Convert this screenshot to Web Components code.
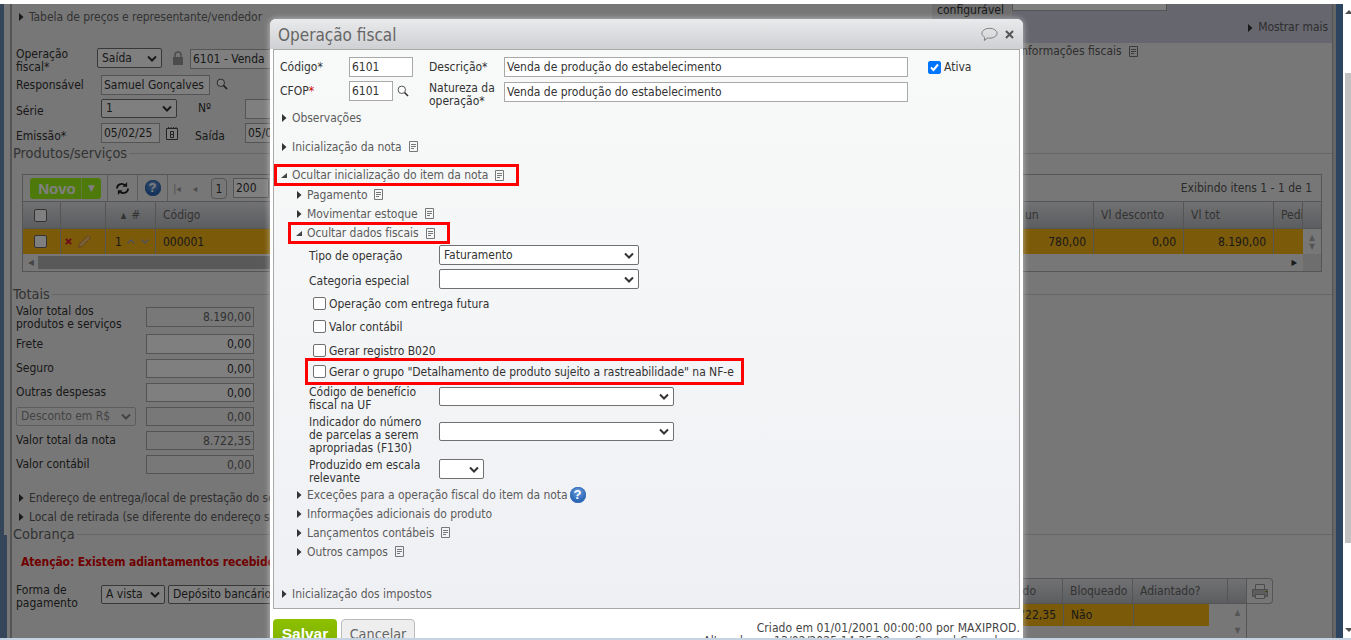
<!DOCTYPE html>
<html lang="pt-BR">
<head>
<meta charset="utf-8">
<title>Operação fiscal</title>
<style>
  html, body { margin: 0; height: 100%; overflow: hidden; background: #fff; }
  body { font-family: "DejaVu Sans Condensed", "DejaVu Sans", "Liberation Sans", sans-serif; font-size: 12px; color: #333; }
</style>
</head>
<body>
<app-frame>
  <app-form></app-form>
  <fiscal-modal slot="modal"></fiscal-modal>
</app-frame>

<script>
class Ui extends HTMLElement {
  constructor() {
    super();
    this.attachShadow({mode: 'open'});
  }
  connectedCallback() {
    if (!this.shadowRoot.innerHTML) this.shadowRoot.innerHTML = this.template;
  }
}

class UiInput extends Ui {
  get template() {
    return `<style>
      :host { display: block; box-sizing: border-box; height: 20px; border: 1px solid #a9a9a9; background: #fff; color: #333;
        padding: 0 2px; line-height: 19px; white-space: nowrap; overflow: hidden; flex: none; }
      :host([num]) { text-align: right; }
      :host([ro]) { color: #666; background: #f0f0f0; }
    </style><slot></slot>`;
  }
}
customElements.define('ui-input', UiInput);

class UiSelect extends Ui {
  get template() {
    return `<style>
      :host { display: flex; align-items: center; box-sizing: border-box; height: 20px; border: 1px solid #707070; border-radius: 2px;
        background: #fff; color: #333; padding: 0 4px; white-space: nowrap; overflow: hidden; flex: none; }
      :host([off]) { color: #888; border-color: #bbb; background: #eee; }
      span { flex: 1; min-width: 0; overflow: hidden; }
      svg { flex: none; margin-left: 3px; }
    </style><span><slot></slot></span>
    <svg width="10" height="7" viewBox="0 0 10 7"><path d="M1 1.500l4 4 4-4" fill="none" stroke="currentColor" stroke-width="2"/></svg>`;
  }
}
customElements.define('ui-select', UiSelect);

class UiCheck extends Ui {
  get template() {
    return `<style>
      :host { display: flex; align-items: center; height: 18px; color: #333; white-space: nowrap; flex: none; }
      i { box-sizing: border-box; width: 13px; height: 13px; border: 1px solid #707070; border-radius: 2px; background: #fff; margin-right: 3px; flex: none; display: block; }
      :host([on]) i { background: #0075ff; border-color: #0075ff; }
      svg { display: none; }
      :host([on]) svg { display: block; }
      span { padding-top: 1px; }
    </style><i><svg width="11" height="11" viewBox="0 0 11 11"><path d="M2 5.500l2.500 2.500 4.500-5.500" fill="none" stroke="#fff" stroke-width="2"/></svg></i><span><slot></slot></span>`;
  }
}
customElements.define('ui-check', UiCheck);

class NoteIcon extends Ui {
  get template() {
    return `<style>:host { display: inline-block; width: 9px; height: 11px; flex: none; }</style>
    <svg width="9" height="11" viewBox="0 0 9 11" style="display:block"><path d="M.5.500h8v10h-8z" fill="none" stroke="#777"/><path d="M2 3.500h5M2 5.500h5M2 7.500h3" stroke="#777"/></svg>`;
  }
}
customElements.define('note-icon', NoteIcon);

class HelpIcon extends Ui {
  get template() {
    return `<style>
      :host { display: inline-block; flex: none; width: 16px; height: 16px; border-radius: 50%; color: #fff; text-align: center;
        font: bold 13px/16px "Liberation Sans", sans-serif; background: radial-gradient(circle at 50% 30%, #6f9fe0, #1f5fb0 75%); box-shadow: inset 0 0 0 1px #3f73ba; }
    </style>?`;
  }
}
customElements.define('help-icon', HelpIcon);

class SearchIcon extends Ui {
  get template() {
    return `<style>:host { display: inline-block; width: 12px; height: 12px; flex: none; }</style>
    <svg width="12" height="12" viewBox="0 0 12 12" style="display:block"><circle cx="4.800" cy="4.800" r="3.700" fill="#fff" stroke="#555"/><path d="M7.500 7.500l3.500 3.500" stroke="#333" stroke-width="1.600"/></svg>`;
  }
}
customElements.define('search-icon', SearchIcon);

// linha recolhivel: seta + texto + icone
class FoldLink extends Ui {
  get template() {
    return `<style>
      :host { display: flex; align-items: center; height: 19px; color: #5c5c5c; white-space: nowrap; letter-spacing: -.05px; }
      svg { width: 6px; height: 8px; margin-right: 5px; flex: none; }
      ::slotted(note-icon) { margin-left: 7px; }
      ::slotted(help-icon) { margin-left: 2px; }
    </style>
    <svg viewBox="0 0 6 8">${this.hasAttribute('open')
      ? '<path d="M0 7l6-5v5z" fill="#444"/>'
      : '<path d="M1 0l4.500 4-4.500 4z" fill="#333"/>'}</svg><slot></slot>`;
  }
}
customElements.define('fold-link', FoldLink);

class RedMark extends Ui {
  get template() {
    return `<style>
      :host { display: flex; align-items: center; box-sizing: border-box; border: 3px solid #f00; }
    </style><slot></slot>`;
  }
}
customElements.define('red-mark', RedMark);

class FormRow extends Ui {
  get template() {
    return `<style>
      :host { display: flex; align-items: flex-start; color: #333; line-height: 13px; }
      ::slotted(label) { display: block; flex: none; }
    </style><slot></slot>`;
  }
}
customElements.define('form-row', FormRow);

class SectionTitle extends Ui {
  get template() {
    return `<style>
      :host { display: flex; align-items: center; height: 14px; font-size: 14.400px; color: #666; }
      i { flex: 1; height: 1px; background: #ccc; margin-left: 2px; }
    </style><slot></slot><i></i>`;
  }
}
customElements.define('section-title', SectionTitle);

class DataGrid extends Ui {
  get template() {
    return `<style>
      :host { display: block; box-sizing: border-box; border: 1px solid #aaa; color: #333; }
      .tools { display: flex; align-items: center; height: 26px; }
      .tools slot { display: flex; align-items: center; flex: 1; height: 100%; }
      .h, .r { display: grid; grid-template-columns: var(--cols); }
      .h { height: 28px; border-top: 1px solid #aaa; border-bottom: 1px solid #aaa; box-sizing: border-box; background: linear-gradient(#e2e3e7, #b9bbc0); }
      .r { height: 25px; background: #f6b414; }
      ::slotted([slot=head]), ::slotted([slot=row]) { display: contents; }
    </style>
    <div class="tools"><slot name="tools"></slot></div>
    <div class="h"><slot name="head"></slot></div>
    <div class="r"><slot name="row"></slot></div>
    <slot name="foot"></slot>`;
  }
}
customElements.define('data-grid', DataGrid);

class GridCell extends Ui {
  get template() {
    return `<style>
      :host { display: flex; align-items: center; box-sizing: border-box; padding: 0 7px; border-right: 1px solid #aaa; overflow: hidden; white-space: nowrap; min-width: 0; }
      :host([num]) { justify-content: flex-end; }
      :host([head]) { color: #666; }
      :host([bare]) { background: #eee; }
      :host([end]) { border-right: 0; padding: 0; justify-content: center; background: #ddd; }
    </style><slot></slot>`;
  }
}
customElements.define('grid-cell', GridCell);

class ItemsGrid extends Ui {
  get template() {
    return `<style>
      :host { display: block; margin: 0 10px; --cols: 38px 45px 50px 1fr 90px 90px 29px 18px; }
      .sep { width: 1px; height: 100%; background: #bbb; flex: none; }
      .novo { box-sizing: border-box; width: 71px; height: 21px; margin-left: 7px; margin-right: 6px; flex: none; border-radius: 3px; background: #9cf418; color: #fff;
        font: bold 15px/21px "Liberation Sans", sans-serif; display: flex; }
      .novo b { flex: 1; text-align: center; padding-left: 3px; }
      .novo i { width: 19px; border-left: 1px solid #c7f57a; text-align: center; font: 9px/20px "DejaVu Sans", sans-serif; }
      .ib { width: 29px; flex: none; display: flex; align-items: center; justify-content: center; height: 100%; }
      .pg { flex: none; color: #999; font-size: 10px; width: 18px; text-align: center; }
      .one { box-sizing: border-box; width: 16px; height: 21px; border: 1px solid #aaa; border-radius: 4px; text-align: center; line-height: 20px; margin: 0 6px 0 7px; flex: none; }
      ui-input { width: 36px; margin-bottom: 1px; border-color: #aaa; }
      .count { margin-left: auto; color: #555; padding-right: 9px; }
      .box { box-sizing: border-box; width: 13px; height: 13px; border: 1px solid #666; border-radius: 2px; background: #fff; display: block; margin: 0 auto; }
      .acts { display: flex; align-items: center; gap: 5px; }
      .foot { display: flex; align-items: center; height: 17px; background: #eee; }
      .foot span { width: 6px; text-align: center; font-size: 8px; color: #888; margin: 0 4px 0 5px; }
      .foot i { width: 985px; height: 13px; background: #b3b3b3; flex: none; }
      .foot u { flex: 1; }
      .foot em { width: 18px; height: 100%; background: #dcdcdc; margin-left: 6px; flex: none; }
      .foot b { font-size: 8px; color: #333; font-weight: normal; }
      .sc { font-size: 8px; line-height: 9px; color: #aaa; text-align: center; }
      .mv { margin-left: 5px; display: flex; gap: 6px; }
    </style>
    <data-grid>
      <div slot="tools" style="display:flex;align-items:center;width:100%;height:100%">
        <div class="novo"><b>Novo</b><i>▼</i></div>
        <div class="sep"></div>
        <div class="ib"><svg width="15" height="13" viewBox="0 0 16 14"><path d="M2 7a5 5 0 0 1 8.500-3.500" fill="none" stroke="#222" stroke-width="2"/><path d="M8 5h5V0z" fill="#222"/><path d="M14 7a5 5 0 0 1-8.500 3.500" fill="none" stroke="#222" stroke-width="2"/><path d="M8 9H3v5z" fill="#222"/></svg></div>
        <div class="sep"></div>
        <div class="ib"><help-icon></help-icon></div>
        <div class="sep"></div>
        <span class="pg">|◂</span><span class="pg">◂</span>
        <span class="one">1</span><ui-input>200</ui-input>
        <span class="count">Exibindo itens 1 - 1 de 1</span>
      </div>
      <div slot="head">
        <grid-cell head style="padding:0 9px 0 7px"><span class="box"></span></grid-cell>
        <grid-cell head></grid-cell>
        <grid-cell head style="justify-content:center"><span style="font-size:8px;margin-right:5px">▲</span>#</grid-cell>
        <grid-cell head style="justify-content:space-between">Código<span style="margin-right:-7px;margin-left:auto;border-left:1px solid #aaa;height:100%;display:flex;align-items:center;width:71px;box-sizing:border-box;padding-left:2px">un</span></grid-cell>
        <grid-cell head>Vl desconto</grid-cell>
        <grid-cell head>Vl tot</grid-cell>
        <grid-cell head style="padding:0 0 0 7px">Pedi</grid-cell>
        <grid-cell head end style="background:none"></grid-cell>
      </div>
      <div slot="row">
        <grid-cell style="padding:0 9px 0 7px"><span class="box"></span></grid-cell>
        <grid-cell style="padding:0 4px"><span class="acts">
          <svg width="7" height="7" viewBox="0 0 8 8"><path d="M1 1l6 6M7 1L1 7" stroke="#e02030" stroke-width="2.400"/></svg>
          <svg width="15" height="15" viewBox="0 0 15 15"><path d="M1.500 13.500l1-3.500 8.500-8.500 2.500 2.500-8.500 8.500z" fill="#f2c070" stroke="#c88838"/></svg>
        </span></grid-cell>
        <grid-cell style="padding:0 0 0 9px">1<span class="mv">
          <svg width="8" height="5" viewBox="0 0 8 5"><path d="M.5 4.500L4 1l3.500 3.500" fill="none" stroke="#a0a0c0" stroke-width="1.300"/></svg>
          <svg width="8" height="5" viewBox="0 0 8 5"><path d="M.5.500L4 4 7.500.500" fill="none" stroke="#a0a0c0" stroke-width="1.300"/></svg>
        </span></grid-cell>
        <grid-cell style="justify-content:space-between">000001<span>780,00</span></grid-cell>
        <grid-cell num>0,00</grid-cell>
        <grid-cell num>8.190,00</grid-cell>
        <grid-cell style="border:0"></grid-cell>
        <grid-cell end style="background:#eee"><span class="sc">▲<br>▼</span></grid-cell>
      </div>
      <div slot="foot" class="foot"><span>◀</span><i></i><u></u><b>▶</b><em></em></div>
    </data-grid>`;
  }
}
customElements.define('items-grid', ItemsGrid);

class BillingGrid extends Ui {
  get template() {
    return `<style>
      :host { display: flex; flex: none; align-items: flex-start; color: #333; height: 70px; }
      .t { flex: 1; min-width: 0; }
      .h, .r { display: grid; grid-template-columns: 1fr 70px 95px 18px; }
      .h { height: 26px; box-sizing: border-box; border: 1px solid #aaa; border-width: 1px 1px 1px 0; background: linear-gradient(#e2e3e7, #b9bbc0); }
      .r { height: 22px; grid-template-columns: 1fr 70px 75px 20px 18px; grid-template-rows: 22px; }
      .sc { font-size: 8px; color: #aaa; line-height: 18px; text-align: center; background: #eee; height: 48px; border-right: 1px solid #aaa; box-sizing: border-box; }
      .p { box-sizing: border-box; width: 26px; height: 26px; border: 1px solid #aaa; border-left: 0; border-radius: 0 4px 4px 0; display: flex; align-items: center; justify-content: center; background: #eee; flex: none; }
    </style>
    <div class="t">
      <div class="h">
        <grid-cell head style="justify-content:flex-end;padding-right:26px">do</grid-cell>
        <grid-cell head>Bloqueado</grid-cell>
        <grid-cell head>Adiantado?</grid-cell>
        <grid-cell head end style="border:0;background:none"></grid-cell>
      </div>
      <div class="r">
        <grid-cell num style="background:#f6b414">722,35</grid-cell>
        <grid-cell style="background:#f6b414">Não</grid-cell>
        <grid-cell style="background:#f6b414;border:0"></grid-cell>
        <grid-cell bare style="border:0"></grid-cell>
        <div class="sc">▲<br>▼</div>
      </div>
    </div>
    <div class="p"><svg width="18" height="17" viewBox="0 0 18 17"><path d="M4.500 1.500h9v5h-9z" fill="#f4f4f4" stroke="#999"/><path d="M1.500 6.500h15v7h-15z" fill="#bdbdbd" stroke="#999"/><path d="M4.500 11.500h9v4h-9z" fill="#f4f4f4" stroke="#999"/><path d="M14 8.500h2" stroke="#6a0"/></svg></div>`;
  }
}
customElements.define('billing-grid', BillingGrid);

class AppForm extends Ui {
  get template() {
    return `<style>
      :host { display: block; height: 100%; background: #eee; color: #333; overflow: hidden; }
      .top { display: flex; height: 39px; }
      .top .l { width: 920px; padding: 3px 0 0 5px; box-sizing: border-box; }
      .top .d { flex: 1; background: #ccccde; display: flex; line-height: 13px; }
      .cfg { padding: 0 0 0 5px; width: 75px; height: 13px; background: #dcdcdc; flex: none; }
      .top ui-input { width: 155px; height: 8px; margin: -1px 0 0 0; }
      .more { margin: 14px 4px 0 auto; }
      .head { padding: 5px 0 0 4px; box-sizing: border-box; height: 103px; }
      form-row { position: relative; }
      .head form-row + form-row { margin-top: 4px; }
      .info { margin-left: auto; width: 314px; box-sizing: border-box; height: 19px; }
      section-title { margin-left: 1px; }
      .tot { padding: 0 0 0 4px; }
      .tot form-row { margin-top: 5px; height: 19px; align-items: center; }
      .tot ui-input { width: 108px; height: 19px; margin-left: auto; margin-right: 0; line-height: 18px; }
      .links { padding-left: 6px; margin-top: 14px; }
      .warn { margin: 14px 0 0 9px; height: 14px; font-weight: bold; color: #e00000; line-height: 14px; white-space: nowrap; letter-spacing: -.1px; }
      .pay { display: flex; align-items: flex-start; margin: 9px 0 0 4px; line-height: 13px; }
      .pay label { width: 85px; margin-top: 6px; flex: none; }
      .pay ui-select { margin-top: 7px; height: 19px; }
      billing-grid { margin-left: auto; margin-right: 59px; width: 400px; }
    </style>
    <div class="top">
      <div class="l"><fold-link style="color:#666;margin-left:1px">Tabela de preços e representante/vendedor</fold-link></div>
      <div class="d">
        <div class="cfg">configurável</div>
        <ui-input></ui-input>
        <fold-link class="more">Mostrar mais</fold-link>
      </div>
    </div>
    <div class="head">
      <form-row style="height:23px">
        <label style="width:81px;margin-top:0;line-height:12.500px">Operação<br>fiscal*</label>
        <ui-select style="width:65px">Saída</ui-select>
        <svg style="margin:3px 6px 0 10px;flex:none" width="12" height="14" viewBox="0 0 12 14"><path d="M3 6V4a3 3 0 0 1 6 0v2" fill="none" stroke="#999" stroke-width="1.500"/><path d="M1 6h10v8H1z" fill="#999"/></svg>
        <ui-input style="width:300px;margin-top:1px">6101 - Venda</ui-input>
        <div class="info" style="display:flex;align-items:center;gap:7px;margin-top:-6px;color:#5c5c5c"><span>Informações fiscais</span><note-icon></note-icon></div>
      </form-row>
      <form-row style="margin-top:4px;height:20px">
        <label style="width:85px;margin-top:4px">Responsável</label>
        <ui-input style="width:109px">Samuel Gonçalves</ui-input>
        <search-icon style="margin:3px 0 0 6px"></search-icon>
      </form-row>
      <form-row style="height:20px">
        <label style="width:85px;margin-top:6px">Série</label>
        <ui-select style="width:76px;height:19px">1</ui-select>
        <label style="margin:3px 0 0 21px;width:47px">Nº</label>
        <ui-input style="width:70px"></ui-input>
      </form-row>
      <form-row style="height:20px">
        <label style="width:85px;margin-top:7px">Emissão*</label>
        <ui-input style="width:59px">05/02/25</ui-input>
        <svg style="margin:3px 0 0 6px;flex:none" width="12" height="14" viewBox="0 0 12 14"><path d="M.5 2.500h11v11H.5z" fill="#fff" stroke="#444"/><path d="M2.500 1v2M5 1v2M7.500 1v2M10 1v2" stroke="#444"/><path d="M4.500 5.500h3v6h-3zM4.500 8.500h3" fill="none" stroke="#444"/></svg>
        <label style="margin:7px 0 0 17px;width:50px">Saída</label>
        <ui-input style="width:70px">05/02/25</ui-input>
      </form-row>
    </div>
    <section-title>Produtos/serviços</section-title>
    <items-grid style="margin-top:14px"></items-grid>
    <section-title style="margin-top:15px">Totais</section-title>
    <div class="tot">
      <form-row style="margin-top:6px;height:20px;align-items:flex-start">
        <label style="width:130px;line-height:13px;margin-top:-2px">Valor total dos<br>produtos e serviços</label>
        <ui-input num ro style="height:20px;margin-left:0">8.190,00</ui-input>
      </form-row>
      <form-row style="margin-top:7px;height:20px"><label style="width:130px">Frete</label><ui-input num style="margin-left:0;height:20px">0,00</ui-input></form-row>
      <form-row><label style="width:130px">Seguro</label><ui-input num style="margin-left:0">0,00</ui-input></form-row>
      <form-row><label style="width:130px">Outras despesas</label><ui-input num style="margin-left:0">0,00</ui-input></form-row>
      <form-row><ui-select off style="width:120px;height:19px;margin-right:10px">Desconto em R$</ui-select><ui-input num ro style="margin-left:0">0,00</ui-input></form-row>
      <form-row><label style="width:130px">Valor total da nota</label><ui-input num ro style="margin-left:0">8.722,35</ui-input></form-row>
      <form-row><label style="width:130px">Valor contábil</label><ui-input num ro style="margin-left:0">0,00</ui-input></form-row>
    </div>
    <div class="links">
      <fold-link>Endereço de entrega/local de prestação do serviço</fold-link>
      <fold-link>Local de retirada (se diferente do endereço sede)</fold-link>
    </div>
    <section-title style="margin-top:1px">Cobrança</section-title>
    <div class="warn">Atenção: Existem adiantamentos recebidos</div>
    <div class="pay">
      <label>Forma de<br>pagamento</label>
      <ui-select style="width:64px;margin-right:3px">À vista</ui-select>
      <ui-select style="width:120px">Depósito bancário</ui-select>
      <billing-grid></billing-grid>
    </div>`;
  }
}
customElements.define('app-form', AppForm);

class FiscalModal extends Ui {
  get template() {
    return `<style>
      :host { position: absolute; left: 270px; top: 15px; width: 753px; height: 640px; background: #fff; border-radius: 6px 6px 0 0; box-shadow: 0 0 6px rgba(255,255,255,.55); display: block; color: #333; }
      .bar { display: flex; align-items: center; height: 30px; padding: 0 9px 0 8px; box-sizing: border-box; background: linear-gradient(#e9eaec, #cfd0d3); border-radius: 6px 6px 0 0; }
      .title { font-size: 17px; color: #666; flex: 1; padding-top: 2px; }
      .panel { box-sizing: border-box; margin: 0 3px; height: 560px; border: 1px solid #aaa; background: linear-gradient(#f8faf9, #eff0f4); }
      .tf { margin-left: 6px; }
      .lb { margin-top: 4px; }
      ui-select { width: 200px; }
      .sub { margin-left: 22px; }
      .foot { display: flex; padding: 10px 3px 0; }
      .btn { box-sizing: border-box; height: 30px; border-radius: 4px 4px 0 0; flex: none; text-align: center; }
      .save { width: 64px; background: linear-gradient(#8cc000, #7fb000); color: #fff; font: bold 15.500px/30px "Liberation Sans", sans-serif; }
      .cancel { width: 74px; margin-left: 4px; background: #eee; border: 1px solid #bbb; color: #666; font-size: 14.300px; line-height: 28px; }
      .stamp { margin-left: auto; text-align: right; color: #444; line-height: 13px; white-space: nowrap; padding-top: 3px; letter-spacing: .09px; }
    </style>
    <div class="bar">
      <span class="title">Operação fiscal</span>
      <svg width="17" height="15" viewBox="0 0 18 15" style="margin-right:7px"><path d="M9 1c4.400 0 8 2.300 8 5.200s-3.600 5.200-8 5.200c-.8 0-1.500 0-2.200-.2L3.500 14l.4-3.500C2.100 9.500 1 8 1 6.200 1 3.300 4.600 1 9 1z" fill="none" stroke="#777"/></svg>
      <svg width="9" height="9" viewBox="0 0 9 9"><path d="M1 1l7 7M8 1L1 8" stroke="#555" stroke-width="2"/></svg>
    </div>
    <div class="panel">
      <form-row class="tf" style="margin-top:7px;height:20px">
        <label class="lb" style="width:69px">Código*</label>
        <ui-input style="width:64px">6101</ui-input>
        <label class="lb" style="width:75px;margin-left:16px">Descrição*</label>
        <ui-input style="width:404px">Venda de produção do estabelecimento</ui-input>
        <ui-check on style="margin-left:20px;height:20px">Ativa</ui-check>
      </form-row>
      <form-row class="tf" style="margin-top:4px;height:21px">
        <label class="lb" style="width:69px">CFOP<span style="color:#c00">*</span></label>
        <ui-input style="width:44px">6101</ui-input>
        <search-icon style="margin:4px 0 0 4px;width:32px"></search-icon>
        <label style="width:75px;margin-left:0;margin-top:1px;line-height:13px">Natureza da<br>operação*</label>
        <ui-input style="width:404px;margin-top:1px">Venda de produção do estabelecimento</ui-input>
      </form-row>
      <fold-link style="margin:6px 0 0 7px">Observações</fold-link>
      <fold-link style="margin:10px 0 0 7px">Inicialização da nota<note-icon></note-icon></fold-link>
      <red-mark style="margin:8px 0 0 0;width:245px;height:22px;padding-left:4px"><fold-link open>Ocultar inicialização do item da nota<note-icon></note-icon></fold-link></red-mark>
      <fold-link class="sub" style="margin-top:-1px">Pagamento<note-icon></note-icon></fold-link>
      <fold-link class="sub">Movimentar estoque<note-icon></note-icon></fold-link>
      <red-mark style="margin:-1px 0 0 14px;width:162px;height:22px;padding-left:5px"><fold-link open>Ocultar dados fiscais<note-icon></note-icon></fold-link></red-mark>
      <form-row style="margin:1px 0 0 35px;height:20px"><label class="lb" style="width:130px;margin-top:5px">Tipo de operação</label><ui-select>Faturamento</ui-select></form-row>
      <form-row style="margin:4px 0 0 35px;height:20px"><label class="lb" style="width:130px;margin-top:6px">Categoria especial</label><ui-select></ui-select></form-row>
      <ui-check style="margin:5px 0 0 39px">Operação com entrega futura</ui-check>
      <ui-check style="margin:5px 0 0 39px">Valor contábil</ui-check>
      <ui-check style="margin:6px 0 0 39px">Gerar registro B020</ui-check>
      <red-mark style="margin:-1px 0 0 31px;width:439px;height:27px;padding-left:5px"><ui-check style="letter-spacing:-.04px">Gerar o grupo "Detalhamento de produto sujeito a rastreabilidade" na NF-e</ui-check></red-mark>
      <form-row style="margin:1px 0 0 35px;height:26px"><label style="width:130px">Código de benefício<br>fiscal na UF</label><ui-select style="width:235px;height:19px;margin-top:1px"></ui-select></form-row>
      <form-row style="margin:4px 0 0 35px;height:39px"><label style="width:130px">Indicador do número<br>de parcelas a serem<br>apropriadas (F130)</label><ui-select style="width:235px;height:19px;margin-top:6px"></ui-select></form-row>
      <form-row style="margin:4px 0 0 35px;height:26px"><label style="width:130px">Produzido em escala<br>relevante</label><ui-select style="width:45px"></ui-select></form-row>
      <fold-link class="sub">Exceções para a operação fiscal do item da nota<help-icon></help-icon></fold-link>
      <fold-link class="sub">Informações adicionais do produto</fold-link>
      <fold-link class="sub">Lançamentos contábeis<note-icon></note-icon></fold-link>
      <fold-link class="sub">Outros campos<note-icon></note-icon></fold-link>
      <fold-link style="margin:23px 0 0 7px">Inicialização dos impostos</fold-link>
    </div>
    <div class="foot">
      <div class="btn save">Salvar</div>
      <div class="btn cancel">Cancelar</div>
      <div class="stamp">Criado em 01/01/2001 00:00:00 por MAXIPROD.<br>Alterado em 13/02/2025 14:35:20 por Samuel Gonçalves.</div>
    </div>`;
  }
}
customElements.define('fiscal-modal', FiscalModal);

class AppFrame extends Ui {
  get template() {
    return `<style>
      :host { display: flex; flex-direction: column; height: 640px; }
      .area { flex: 1; position: relative; overflow: hidden; display: flex; min-height: 0; margin-top: 4px; }
      .under { flex: 1; display: flex; min-width: 0; position: relative; }
      .rail-l { width: 10px; flex: none; display: flex; flex-direction: column; background: #eee; }
      .rail-l i { display: block; background: #6d8db5; }
      .rail-l i:first-child { width: 4px; height: 531px; }
      .rail-l i:last-child { width: 7px; flex: 1; }
      .main { flex: 1; min-width: 0; border-left: 2px solid #aaa; }
      .rail-r { flex: none; width: 4px; box-sizing: border-box; border-left: 1px solid #aaa; background: #ccc; }
      .blue { flex: none; width: 7px; background: #5a8ac0; }
      .shade { position: absolute; inset: 0; background: rgba(0,0,0,.5); }
      .bar { flex: none; width: 8px; background: #fff; position: relative; overflow: hidden; display: flex; flex-direction: column; }
      .thumb { margin: 69px 0 0 2px; height: 470px; background: #c1c1c1; flex: none; }
      .up, .down { position: absolute; right: -2px; width: 0; height: 0; border: 4px solid transparent; }
      .up { top: 6px; border-top: 0; border-bottom-color: #505050; }
      .down { bottom: 6px; border-bottom: 0; border-top-color: #505050; }
      .strip { flex: none; height: 2px; background: #c5d3e3; }
    </style>
    <div class="area">
      <div class="under">
        <div class="rail-l"><i></i><i></i></div>
        <div class="main"><slot></slot></div>
        <div class="rail-r"></div>
        <div class="blue"></div>
        <div class="shade"></div>
      </div>
      <div class="bar"><div class="thumb"></div><span class="up"></span><span class="down"></span></div>
      <slot name="modal"></slot>
    </div>
    <div class="strip"></div>`;
  }
}
customElements.define('app-frame', AppFrame);
</script>
</body>
</html>
